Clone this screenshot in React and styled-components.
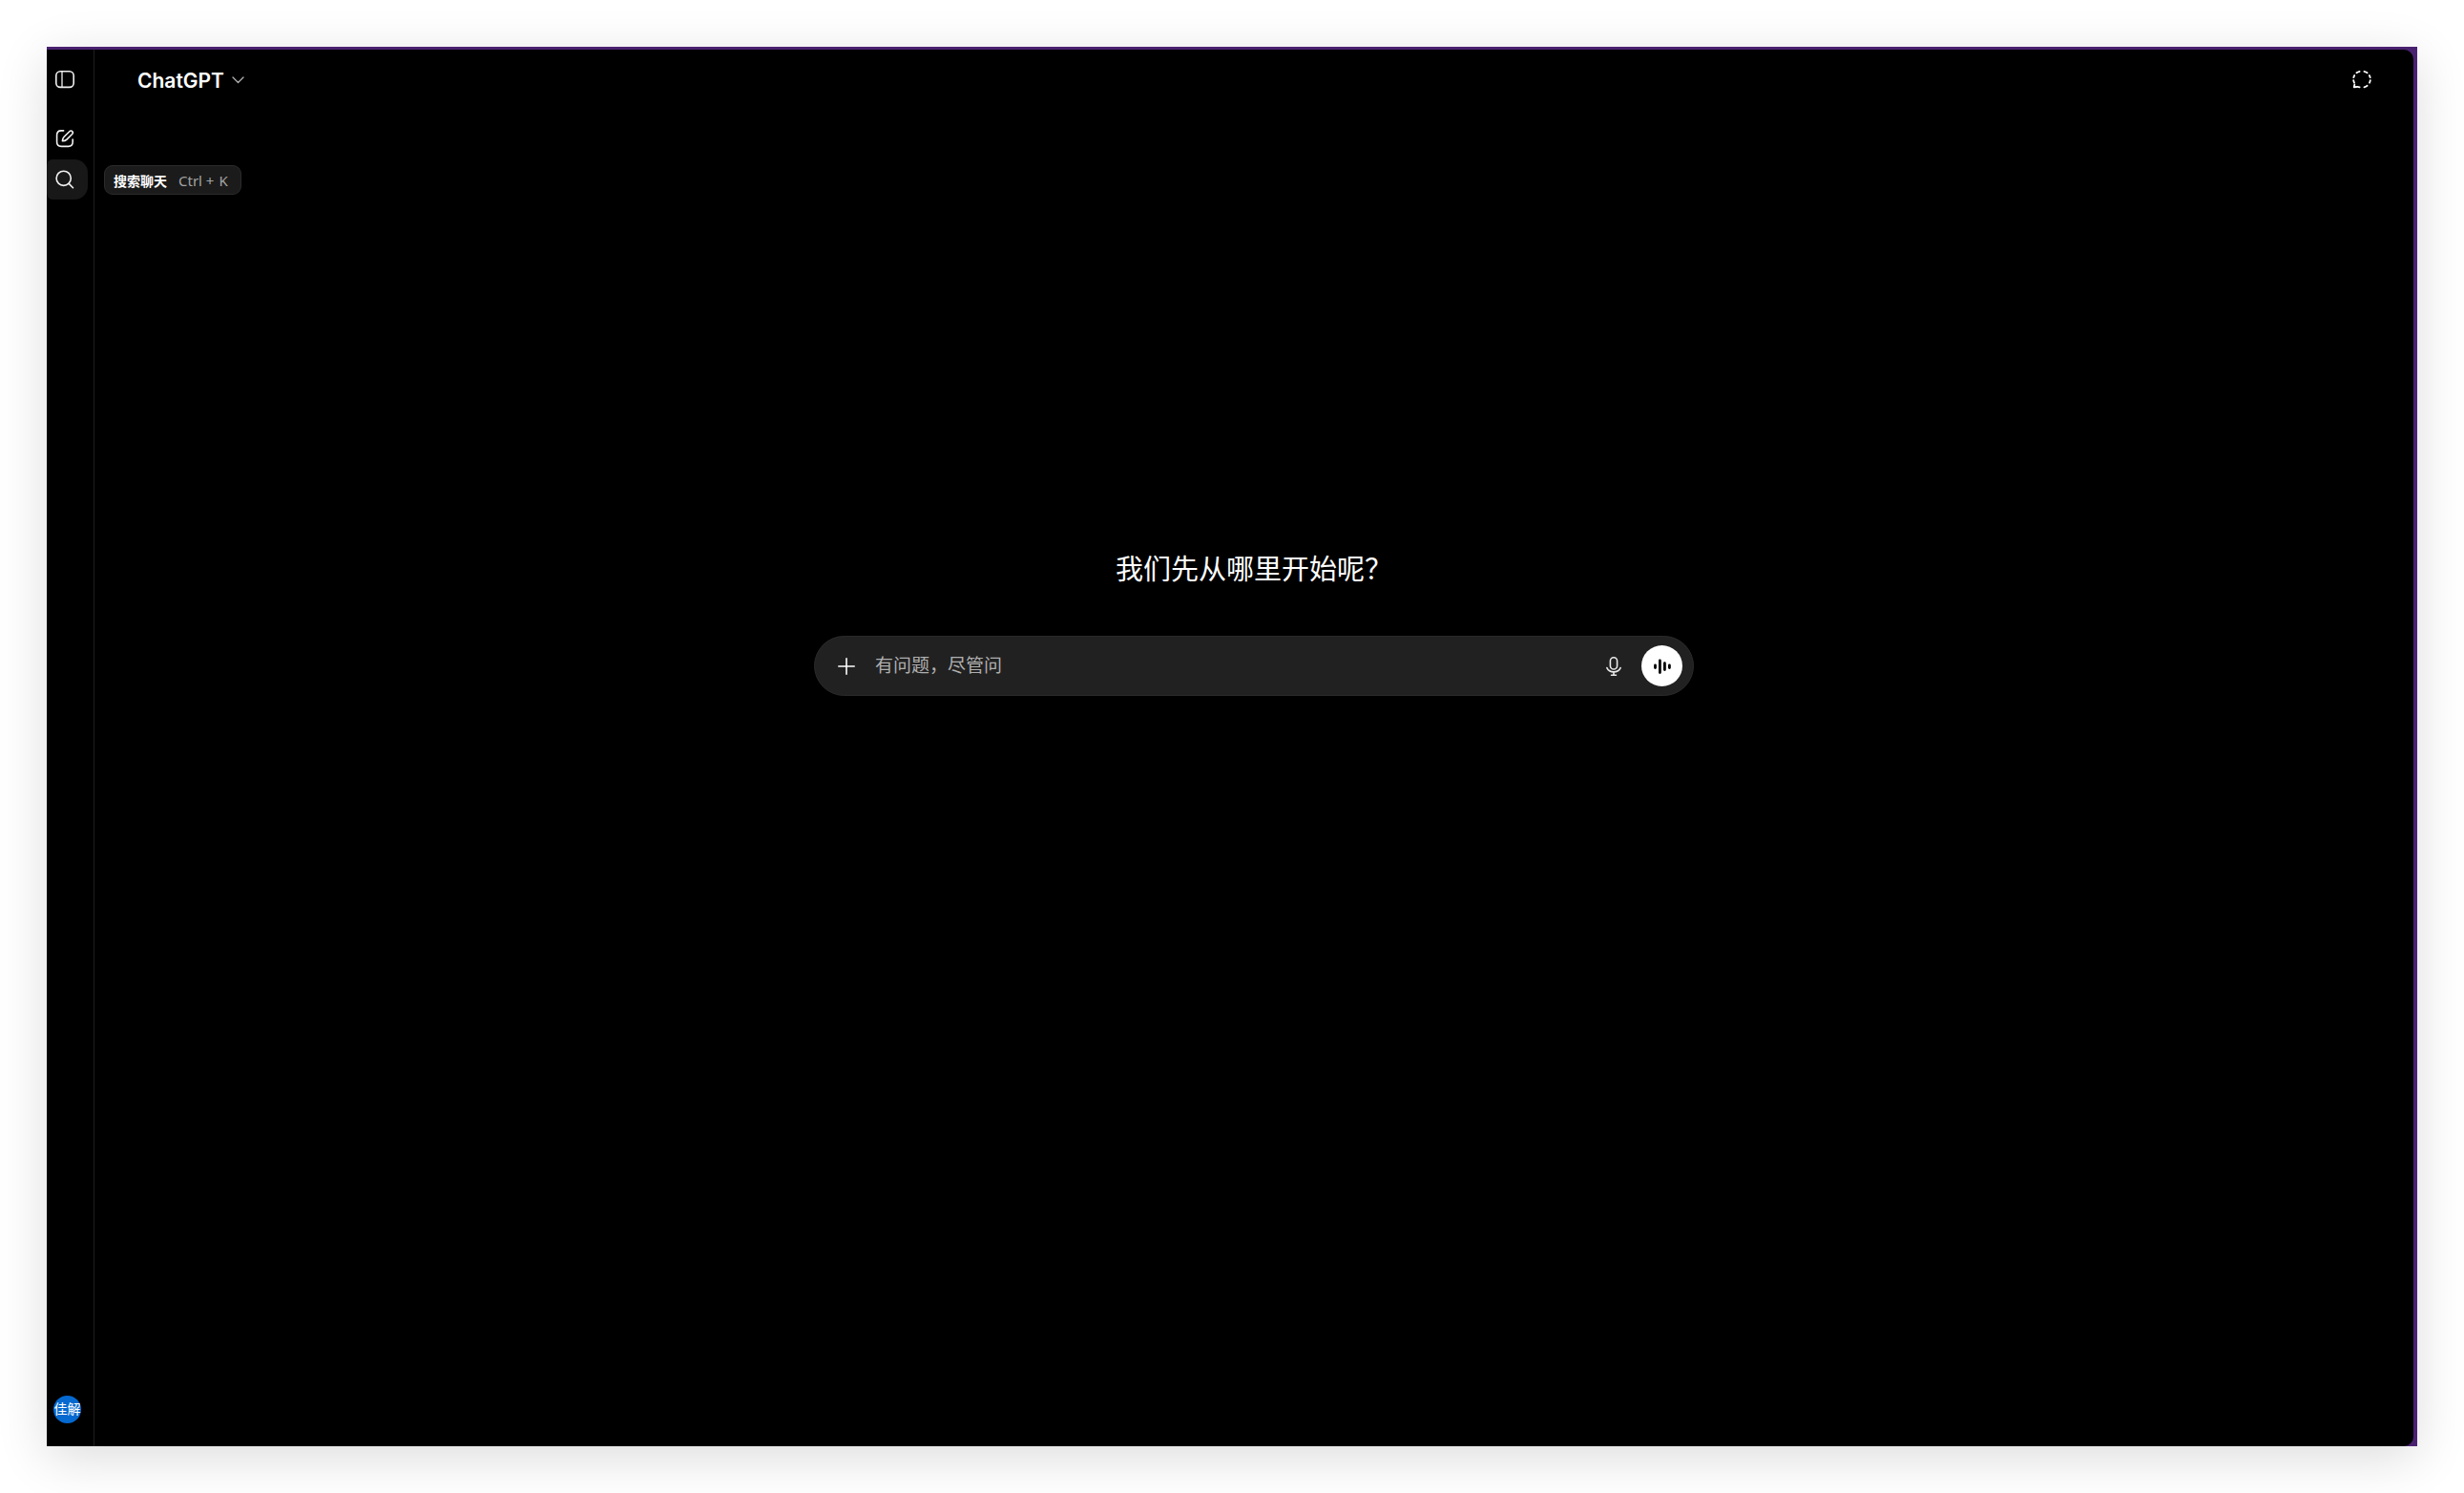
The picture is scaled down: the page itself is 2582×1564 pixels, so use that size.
import styled, { createGlobalStyle } from 'styled-components';

const GlobalStyle = createGlobalStyle`
    * {
        box-sizing: border-box;
    }

    body {
        margin: 0;
        background: #ffffff;
        color: #ffffff;
        font-family: "Liberation Sans", "Noto Sans CJK SC", sans-serif;
    }

    button, input {
        font-family: inherit;
    }
`;

const Page = styled.div`
    min-height: 100vh;
    padding: 49px;
    display: flex;
`;

const Frame = styled.div`
    flex: 1;
    display: flex;
    padding: 3px 4px 0 0;
    background: #4a2170;
    box-shadow: 0 12px 50px rgba(0, 0, 0, 0.14);
`;

const Screen = styled.div`
    flex: 1;
    display: flex;
    background: #000000;
    border-radius: 0 10px 10px 0;
`;

const Sidebar = styled.nav`
    width: 50px;
    padding: 10px 6px 24px 0;
    display: flex;
    flex-direction: column;
    border-right: 1px solid #1e1e1e;
`;

const SideButton = styled.button`
    width: 43px;
    height: 42px;
    padding: 0 5px 0 0;
    border: none;
    border-radius: 6px 14px 14px 6px;
    background: ${({ $active }) => ($active ? '#181818' : 'transparent')};
    color: #f0f0f0;
    display: flex;
    align-items: center;
    justify-content: center;
    cursor: pointer;
`;

const SideGroup = styled.div`
    margin-top: 20px;
    display: flex;
    flex-direction: column;
    gap: 1px;
`;

const SearchItem = styled.div`
    position: relative;
`;

const Tooltip = styled.div`
    position: absolute;
    left: 60px;
    top: 6px;
    height: 31px;
    padding: 0 13px 0 9px;
    display: flex;
    align-items: center;
    gap: 12px;
    border: 1px solid #2b2b2b;
    border-radius: 9px;
    background: #1b1b1b;
    font-size: 14px;
    font-weight: 700;
    white-space: nowrap;
`;

const Shortcut = styled.kbd`
    font-family: "Noto Sans", sans-serif;
    font-size: 15px;
    font-weight: 400;
    color: #a3a3a3;
    display: flex;
    gap: 5px;
`;

const Avatar = styled.button`
    width: 29px;
    height: 29px;
    margin: auto 0 0 7px;
    padding: 0;
    border: none;
    border-radius: 50%;
    background: #0569d0;
    color: #ffffff;
    font-size: 14px;
    line-height: 29px;
    cursor: pointer;
`;

const Main = styled.main`
    flex: 1;
    display: flex;
    flex-direction: column;
`;

const Header = styled.header`
    height: 62px;
    padding: 0 44px 0 45px;
    display: flex;
    align-items: center;
    justify-content: space-between;
`;

const ModelButton = styled.button`
    padding: 2px 0 0;
    border: none;
    background: none;
    color: #ffffff;
    font-family: Inter, "Liberation Sans", sans-serif;
    font-size: 21px;
    font-weight: 600;
    display: flex;
    align-items: center;
    gap: 8px;
    cursor: pointer;
`;

const IconButton = styled.button`
    width: 20px;
    height: 20px;
    padding: 0;
    border: none;
    background: none;
    color: ${({ $color }) => $color || '#ffffff'};
    display: flex;
    align-items: center;
    justify-content: center;
    cursor: pointer;
`;

const Content = styled.section`
    padding: 462px 24px 0;
    display: flex;
    flex-direction: column;
    align-items: center;
`;

const Title = styled.h1`
    margin: 0 0 48px;
    font-size: 29px;
    font-weight: 400;
    line-height: 42px;
`;

const Composer = styled.form`
    width: 100%;
    max-width: 922px;
    height: 63px;
    padding: 0 11px 0 23px;
    display: flex;
    align-items: center;
    border: 1px solid #2a2a2a;
    border-radius: 32px;
    background: #212121;
`;

const PromptInput = styled.input`
    flex: 1;
    min-width: 0;
    height: 32px;
    margin: 0 20px;
    padding: 0;
    border: none;
    outline: none;
    background: transparent;
    color: #ffffff;
    font-size: 19px;

    &::placeholder {
        color: #afafaf;
        opacity: 1;
    }
`;

const VoiceButton = styled.button`
    width: 43px;
    height: 43px;
    margin-left: 19px;
    padding: 0;
    border: none;
    border-radius: 50%;
    background: #ffffff;
    color: #000000;
    display: flex;
    align-items: center;
    justify-content: center;
    cursor: pointer;
`;

const Icon = styled.svg`
    display: block;
    fill: none;
    stroke: currentColor;
    stroke-width: ${({ $weight }) => $weight || 1.6};
    stroke-linecap: round;
    stroke-linejoin: round;
`;

function PanelIcon() {
    return (
        <Icon width="20" height="20" viewBox="0 0 20 20">
            <rect x="0.8" y="1.8" width="18.4" height="16.6" rx="4.4" />
            <path d="M7 2v16.2" strokeWidth="1.3" />
        </Icon>
    );
}

function ComposeIcon() {
    return (
        <Icon width="20" height="20" viewBox="0 0 20 20">
            <path d="M8.6 1.9H6.2c-3.4 0-4.6 1.3-4.6 4.6v7.3c0 3.3 1.3 4.6 4.6 4.6h7.4c3.3 0 4.6-1.3 4.6-4.6v-2.7" />
            <path d="M7.4 12.8c.1-1.9.6-3.3 1.8-4.5l5.6-5.6c.8-.8 2.1-.9 2.9-.1s.7 2.1-.1 2.9l-5.6 5.6c-1.2 1.2-2.7 1.7-4.6 1.7z" />
        </Icon>
    );
}

function SearchIcon() {
    return (
        <Icon width="20" height="20" viewBox="0 0 20 20">
            <circle cx="8.7" cy="8.8" r="7.6" />
            <path d="M14.2 14.4l4.3 4.3" />
        </Icon>
    );
}

// Dashed speech bubble with its tail at the lower left
function TemporaryIcon() {
    return (
        <Icon width="20" height="20" viewBox="0 0 20 20" $weight={1.8}>
            <path d="M7.6 1.8a9 9 0 0 0-3.2 1.5M2.2 6a9 9 0 0 0-.9 2.2M1.2 11.2c.1.9.4 1.700.8 2.500M2.300 15.700l-.6 2.600 2.600-.3M5.300 17.800l2.300.5M12.400 1.800c1.200.300 2.300.800 3.200 1.500M17.800 6c.4.700.7 1.400.9 2.200M18.800 11.200c-.1.900-.4 1.700-.8 2.500M15.600 16.700c-.9.700-2 1.300-3.200 1.600" />
        </Icon>
    );
}

function MicIcon() {
    return (
        <Icon width="20" height="22" viewBox="0 0 20 22">
            <rect x="6.4" y="1.8" width="7.2" height="12.2" rx="3.6" />
            <path d="M2.9 12.6c1.2 2.8 3.9 4.3 7.1 4.3s5.9-1.5 7.1-4.3M10 17v3M7.5 20.3h5" />
        </Icon>
    );
}

export default function App() {
    return (
        <>
            <GlobalStyle />
            <Page>
                <Frame>
                    <Screen>
                        <Sidebar>
                            <SideButton type="button" aria-label="打开边栏"><PanelIcon /></SideButton>
                            <SideGroup>
                                <SideButton type="button" aria-label="新聊天"><ComposeIcon /></SideButton>
                                <SearchItem>
                                    <SideButton type="button" $active aria-labelledby="search-tip"><SearchIcon /></SideButton>
                                    <Tooltip id="search-tip" role="tooltip">
                                        搜索聊天
                                        <Shortcut><span>Ctrl +</span> <span>K</span></Shortcut>
                                    </Tooltip>
                                </SearchItem>
                            </SideGroup>
                            <Avatar type="button">佳解</Avatar>
                        </Sidebar>
                        <Main>
                            <Header>
                                <ModelButton type="button">
                                    ChatGPT
                                    <Icon width="13" height="8" viewBox="0 0 13 8" $weight={1.3} color="#b4b4b4">
                                        <path d="M1 1l5.5 5.5L12 1" />
                                    </Icon>
                                </ModelButton>
                                <IconButton type="button" aria-label="临时聊天"><TemporaryIcon /></IconButton>
                            </Header>
                            <Content>
                                <Title>我们先从哪里开始呢？</Title>
                                <Composer onSubmit={(e) => e.preventDefault()}>
                                    <IconButton type="button" aria-label="添加">
                                        <Icon width="20" height="20" viewBox="0 0 20 20">
                                            <path d="M10 1.8v16.4M1.8 10h16.4" />
                                        </Icon>
                                    </IconButton>
                                    <PromptInput type="text" aria-label="有问题，尽管问" placeholder="有问题，尽管问" />
                                    <IconButton type="button" aria-label="听写" $color="#e8e8e8"><MicIcon /></IconButton>
                                    <VoiceButton type="button" aria-label="语音模式">
                                        <Icon width="20" height="20" viewBox="0 0 20 20" $weight={2.8}>
                                            <path d="M2.5 8.9v2.7M7.4 3.9v12.7M12.4 6.7v6.9M17.4 8.9v2.7" />
                                        </Icon>
                                    </VoiceButton>
                                </Composer>
                            </Content>
                        </Main>
                    </Screen>
                </Frame>
            </Page>
        </>
    );
}
